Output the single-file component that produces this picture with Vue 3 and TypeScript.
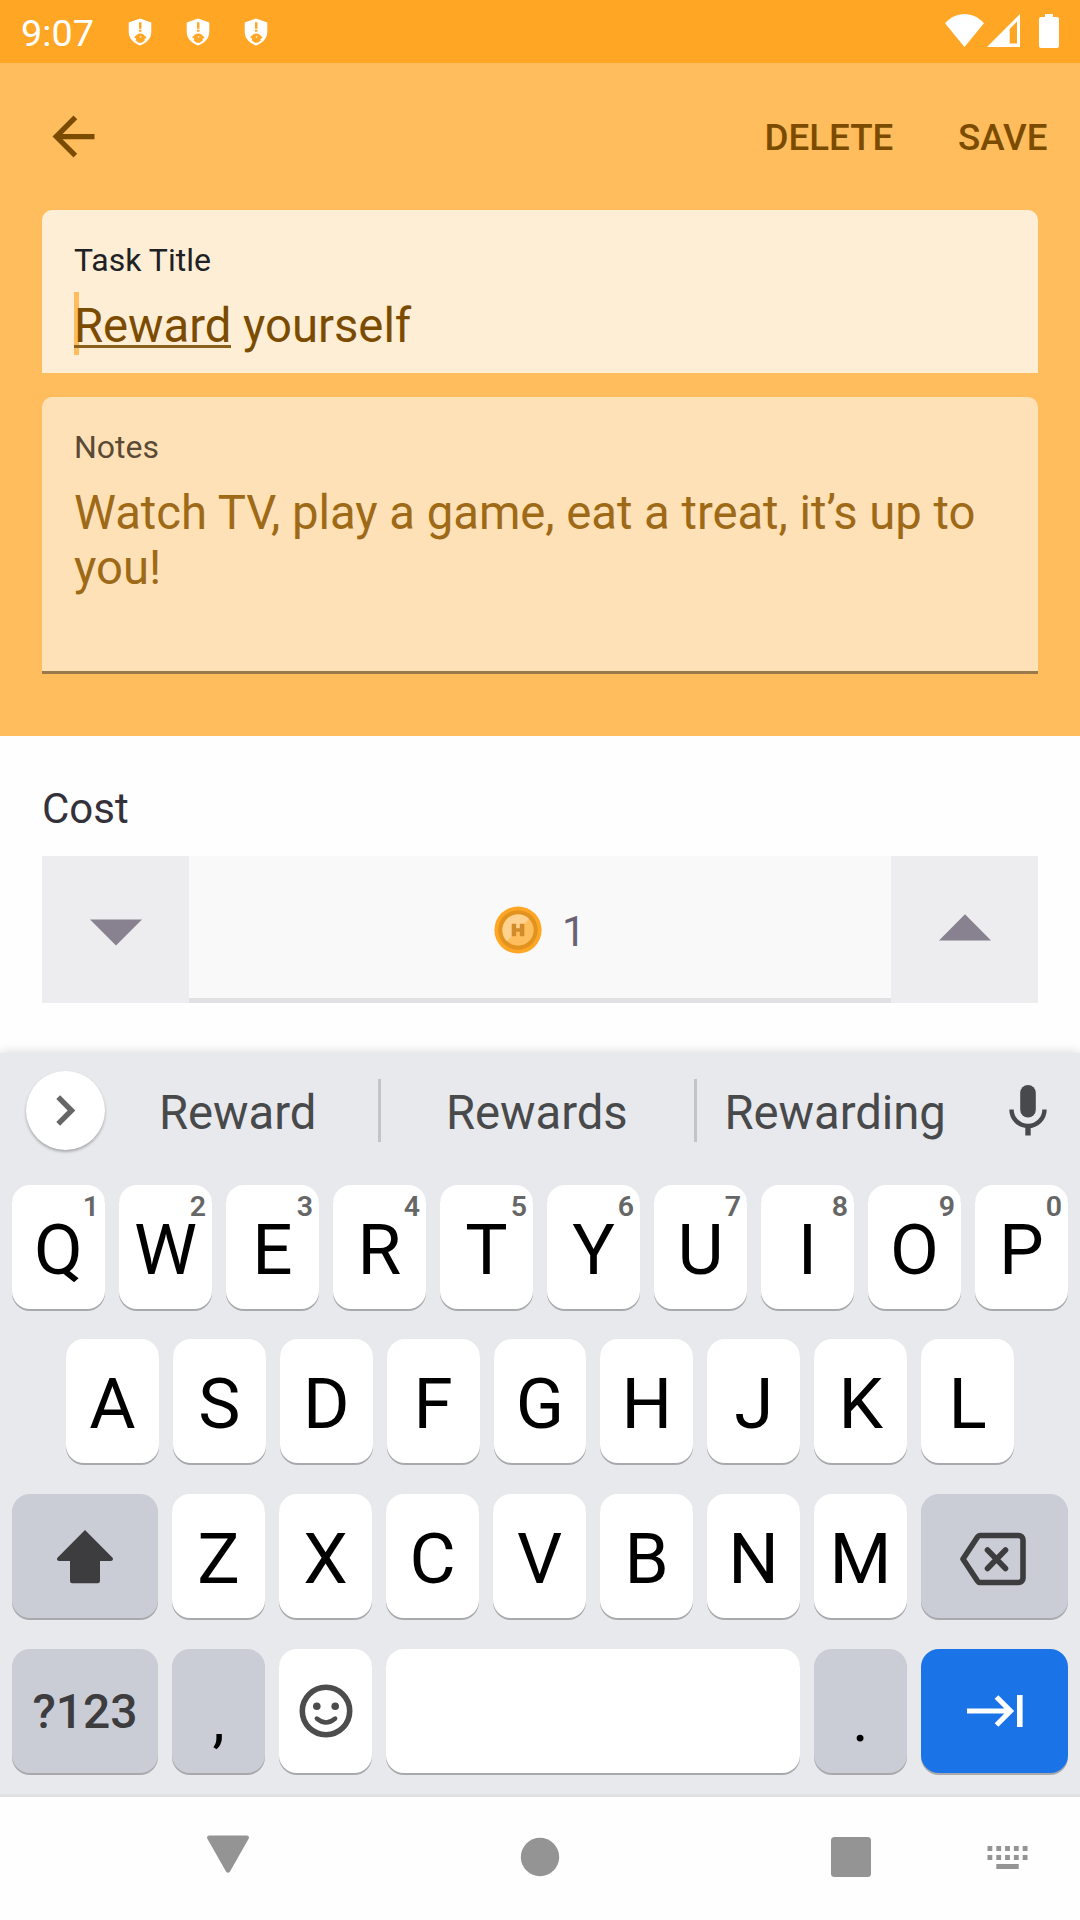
<script setup lang="ts">
interface LetterKey {
  label: string
  hint?: string
}

const topRow: LetterKey[] = 'QWERTYUIOP'.split('').map((label, i) => ({
  label,
  hint: String((i + 1) % 10),
}))
const homeRow: string[] = 'ASDFGHJKL'.split('')
const bottomRow: string[] = 'ZXCVBNM'.split('')
const alerts: number[] = [1, 2, 3]
const dots: number[] = [0, 1, 2, 3, 4]
</script>

<template>
  <div class="screen">
    <div class="status">
      <span class="clock">9:07</span>
      <svg v-for="n in alerts" :key="n" class="shield" viewBox="0 0 24 28">
        <path fill="#fff" d="M12 .5 23.3 4.4V14c0 6.300-4.900 11.200-11.300 13.500C5.600 25.200.7 20.300.7 14V4.400Z" />
        <path fill="#ffa624" d="M11 4.300h2.500v6.400H11zM11 11.700h2.500v2H11zM6 19.500l3-3c2-1.500 4.500-1.500 6.500 0l3.100 3-2.100 1.500.3 1.500-3 2.300h-3l-3-2.300.5-2Z" />
        <path fill="#fff" d="M11.800 18.300h1.500v1.200h-1.500z" />
      </svg>
      <span class="grow"></span>
      <svg class="wifi" viewBox="0 0 39 33"><path fill="#fff" d="M0 9.300C5 3.500 12 0 19.500 0S34 3.500 39 9.300L19.500 33Z" /></svg>
      <svg class="signal" viewBox="0 0 33 33">
        <path fill="#fff" fill-rule="evenodd" d="M33 0V33H0ZM30 7.500 22.700 15V29.500H30Z" />
      </svg>
      <svg class="battery" viewBox="0 0 20 34">
        <path fill="#fff" d="M6 0h8v3h4a2 2 0 0 1 2 2v27a2 2 0 0 1-2 2H2a2 2 0 0 1-2-2V5a2 2 0 0 1 2-2h4Z" />
      </svg>
    </div>

    <header class="header">
      <div class="toolbar">
        <svg class="back" viewBox="0 0 24 24">
          <path fill="#7b4c00" d="M20 11H7.830l5.590-5.590L12 4l-8 8 8 8 1.410-1.410L7.830 13H20v-2z" />
        </svg>
        <span class="grow"></span>
        <span class="action delete">DELETE</span>
        <span class="action">SAVE</span>
      </div>
      <div class="field title-field">
        <div class="label">Task Title</div>
        <div class="value"><span class="caret"></span><span class="composing">Reward</span> yourself</div>
      </div>
      <div class="field notes-field">
        <div class="label">Notes</div>
        <div class="value">Watch TV, play a game, eat a treat, it’s up to you!</div>
      </div>
    </header>

    <main class="cost">
      <div class="cost-label">Cost</div>
      <div class="stepper">
        <div class="step down"><svg width="52" height="27" viewBox="0 0 52 27"><path fill="#878190" d="M0 .4h52L26 26.500Z" /></svg></div>
        <div class="amount">
          <svg class="coin" viewBox="0 0 48 48">
            <circle cx="24" cy="24" r="23.600" fill="#ffa624" />
            <circle cx="24" cy="24" r="19.700" fill="#e1921f" />
            <circle cx="24" cy="24" r="15.700" fill="#ffbe5d" />
            <path fill="#ffd28f" d="M12.900 35.100A15.700 15.700 0 0 1 35.100 12.900Z" />
            <path fill="#d18b28" d="M17.700 17.700h4.500v4.600h3.600v-4.600h4.500v12.600h-4.500v-4.600h-3.600v4.600h-4.500z" />
          </svg>
          <span class="number">1</span>
        </div>
        <div class="step up"><svg width="52" height="27" viewBox="0 0 52 27"><path fill="#878190" d="M0 26.500h52L26 .2Z" /></svg></div>
      </div>
    </main>

    <section class="keyboard">
      <div class="suggestions">
        <div class="expand">
          <svg width="20" height="31" viewBox="0 0 20 31"><path d="M2.200 2.200 15.500 15.500 2.200 28.800" fill="none" stroke="#666" stroke-width="5.400" /></svg>
        </div>
        <div class="word first">Reward</div>
        <div class="divider"></div>
        <div class="word second">Rewards</div>
        <div class="divider"></div>
        <div class="word third">Rewarding</div>
        <svg class="mic" viewBox="0 0 38 51">
          <rect x="11.200" y="0" width="15.600" height="32.500" rx="7.800" fill="#48494b" />
          <path d="M2.500 24.500a16.500 16.500 0 0 0 33 0" fill="none" stroke="#48494b" stroke-width="4.400" />
          <path d="M16.300 40h5.400v10.500h-5.400z" fill="#48494b" />
        </svg>
      </div>

      <div class="row top">
        <div v-for="k in topRow" :key="k.label" class="key">
          {{ k.label }}<span class="hint">{{ k.hint }}</span>
        </div>
      </div>
      <div class="row home">
        <div v-for="k in homeRow" :key="k" class="key">{{ k }}</div>
      </div>
      <div class="row">
        <div class="key grey wide">
          <svg width="58" height="54" viewBox="0 0 58 54">
            <path fill="#3d3d3f" d="M29 0 56.300 27.600c1.400 1.500.5 3.400-1.300 3.400H44v20a2.200 2.200 0 0 1-2.200 2.200H16.200A2.200 2.200 0 0 1 14 51V31H3c-1.800 0-2.700-1.900-1.300-3.400Z" />
          </svg>
        </div>
        <div v-for="k in bottomRow" :key="k" class="key">{{ k }}</div>
        <div class="key grey wide end">
          <svg class="bksp" width="68" height="54" viewBox="0 0 68 54" fill="none" stroke="#3d3d3f" stroke-width="5.600">
            <path stroke-linejoin="round" d="M21 3.500H59.500a4.500 4.500 0 0 1 4.500 4.500V46a4.500 4.500 0 0 1-4.500 4.500H21q-1.500 0-2.500-1.500L4 27 18.500 5q1-1.500 2.500-1.500Z" />
            <path stroke-linecap="round" d="m28.500 18 18 18.500M46.500 18 28.500 36.500" />
          </svg>
        </div>
      </div>
      <div class="row">
        <div class="key grey wide symbols">?123</div>
        <div class="key grey punct">,</div>
        <div class="key">
          <svg class="smile" width="54" height="54" viewBox="0 0 54 54">
            <circle cx="27" cy="27" r="23.700" fill="none" stroke="#4c4c4d" stroke-width="5.600" />
            <circle cx="17.800" cy="22.200" r="3.800" fill="#4c4c4d" />
            <circle cx="36.200" cy="22.200" r="3.800" fill="#4c4c4d" />
            <path d="M17.800 34.500q9.200 8 18.400 0" fill="none" stroke="#4c4c4d" stroke-width="4.400" stroke-linecap="round" />
          </svg>
        </div>
        <div class="key space"></div>
        <div class="key grey punct">.</div>
        <div class="key wide end enter">
          <svg width="56" height="34" viewBox="0 0 56 34">
            <path d="M0 17H43M29.500 3 43.500 17 29.500 31" fill="none" stroke="#fff" stroke-width="5.200" />
            <path d="M50 1h5.600v32H50z" fill="#fff" />
          </svg>
        </div>
      </div>
    </section>

    <nav class="nav">
      <svg viewBox="0 1797 1080 123" fill="#949494" width="1080" height="123">
        <path d="M209 1835.500h38q3 .5 1.500 3.500L230 1871.500q-2 2.500-4 0L207.500 1839q-1.500-3 1.500-3.500Z" />
        <circle cx="540" cy="1857" r="19.200" />
        <rect x="831" y="1837" width="40" height="40" rx="3.500" />
        <g v-for="d in dots" :key="d">
          <rect :x="987.500 + d * 8.800" y="1846" width="4.800" height="5" />
          <rect :x="987.500 + d * 8.800" y="1855" width="4.800" height="5" />
        </g>
        <rect x="996.300" y="1864" width="22.400" height="5" />
      </svg>
    </nav>
  </div>
</template>

<style>
body {
  margin: 0;
  background: #fff;
}
</style>

<style scoped>
.screen {
  width: 1080px;
  height: 1920px;
  overflow: hidden;
  display: flex;
  flex-direction: column;
  font-family: Roboto, sans-serif;
  background: #fefefe;
}
.screen svg {
  display: block;
  flex: none;
}
.grow {
  flex: 1;
}
.status {
  height: 63px;
  flex: none;
  box-sizing: border-box;
  display: flex;
  align-items: flex-start;
  padding: 0 21px 0 21px;
  background: #ffa624;
}
.clock {
  width: 107px;
  font-size: 37.800px;
  line-height: 67px;
  color: #fff;
}
.shield {
  width: 24px;
  height: 28px;
  margin: 18px 34px 0 0;
}
.wifi {
  width: 39px;
  height: 33px;
  margin: 14px 3px 0 0;
}
.signal {
  width: 33px;
  height: 33px;
  margin: 14px 19px 0 0;
}
.battery {
  width: 20px;
  height: 34px;
  margin-top: 14px;
}
.header {
  height: 673px;
  flex: none;
  box-sizing: border-box;
  padding: 0 42px;
  background: #ffbd5d;
}
.toolbar {
  display: flex;
  align-items: center;
  height: 147px;
  margin-right: -9.500px;
}
.back {
  width: 63px;
  height: 63px;
}
.action {
  font-size: 36.750px;
  font-weight: 500;
  line-height: 50px;
  color: #7b4c00;
  margin-top: 2px;
}
.delete {
  margin-right: 64.500px;
}
.field {
  box-sizing: border-box;
  border-radius: 10px 10px 0 0;
  padding: 31px 32px 0;
}
.label {
  font-size: 32px;
  line-height: 38px;
}
.value {
  font-size: 47.250px;
  line-height: 55px;
  letter-spacing: -0.03px;
}
.title-field {
  height: 163px;
  background: #ffeed6;
}
.title-field .label {
  color: #202124;
}
.title-field .value {
  position: relative;
  margin-top: 20px;
  color: #7b4c00;
}
.caret {
  position: absolute;
  left: 0;
  top: -7px;
  width: 5px;
  height: 63px;
  background: #ffbd5d;
}
.composing {
  position: relative;
  display: inline-block;
}
.composing::after {
  content: '';
  position: absolute;
  left: 0;
  right: 0;
  top: 46px;
  height: 3px;
  background: #8b601c;
}
.notes-field {
  height: 276.500px;
  margin-top: 24px;
  background: #ffe1b7;
  border-bottom: 3px solid #9a7a4a;
}
.notes-field .label {
  color: #5a4a35;
}
.notes-field .value {
  margin-top: 20px;
  color: #9e6a17;
}
.cost {
  height: 317px;
  flex: none;
  box-sizing: border-box;
  padding: 48px 42px 0;
}
.cost-label {
  font-size: 42px;
  line-height: 50px;
  color: #34313a;
}
.stepper {
  display: flex;
  height: 147px;
  margin-top: 22px;
}
.step {
  width: 147px;
  box-sizing: border-box;
  display: flex;
  justify-content: center;
  background: #edecee;
}
.down {
  padding-top: 63px;
}
.up {
  padding-top: 58px;
}
.amount {
  flex: 1;
  display: flex;
  align-items: center;
  box-sizing: border-box;
  padding-left: 304.500px;
  background: #f9f9f9;
  border-bottom: 5px solid #e1e1e3;
}
.coin {
  width: 48px;
  height: 48px;
  margin-top: 5px;
}
.number {
  margin: 10px 0 0 20.500px;
  font-size: 42px;
  line-height: 50px;
  color: #686274;
}
.keyboard {
  position: relative;
  height: 744px;
  flex: none;
  box-sizing: border-box;
  background: #e8e9ed;
  border-bottom: 3px solid #e0e1e1;
  box-shadow: 0 -1px 10px rgba(0, 0, 0, 0.14);
}
.suggestions {
  display: flex;
  height: 132px;
  padding: 0 33px 0 26px;
}
.expand {
  width: 79px;
  height: 79px;
  margin-top: 18px;
  border-radius: 50%;
  display: flex;
  align-items: center;
  justify-content: center;
  background: #fff;
  box-shadow: 0 2px 3px rgba(0, 0, 0, 0.28);
}
.expand svg {
  margin-left: 1px;
}
.word {
  margin-top: 32px;
  font-size: 47.250px;
  line-height: 56px;
  letter-spacing: -0.06px;
  color: #48494b;
  box-sizing: border-box;
}
.first {
  width: 273px;
  padding-left: 54px;
}
.second {
  width: 313px;
  padding-left: 65px;
}
.third {
  width: 312px;
  padding-left: 27.500px;
}
.divider {
  width: 3px;
  height: 63px;
  margin-top: 26px;
  background: #c3c4c8;
}
.mic {
  width: 38px;
  height: 51px;
  margin-top: 32px;
}
.row {
  display: flex;
  gap: 14px;
  padding: 0 12px;
  height: 124px;
  margin-bottom: 31px;
}
.top {
  margin-bottom: 30px;
}
.home {
  padding: 0 66px;
}
.key {
  position: relative;
  flex: 1 1 0;
  min-width: 0;
  border-radius: 18px;
  background: #fff;
  box-shadow: 0 2px 0 #a8a9ac;
  font-size: 71px;
  line-height: 130px;
  text-align: center;
  color: #000;
}
.top .key {
  height: 123.500px;
}
.key svg {
  margin: 0 auto;
}
.hint {
  position: absolute;
  right: 6px;
  top: 5px;
  font-size: 28.500px;
  font-weight: 600;
  line-height: 34px;
  color: #666;
}
.grey {
  background: #cacdd6;
}
.wide {
  flex: 0 0 146px;
}
.end {
  flex-basis: 147px;
}
.wide svg {
  margin-top: 36px;
}
.wide svg.bksp {
  margin-top: 38px;
  margin-left: 37.500px;
}
.symbols {
  font-size: 48px;
  font-weight: 500;
  line-height: 126px;
  color: #3d3d3f;
}
.punct {
  font-size: 62px;
  line-height: 142px;
}
.key .smile {
  margin-top: 34.500px;
}
.space {
  flex: 0 0 414px;
}
.enter {
  background: #1b73e8;
}
.enter svg {
  margin-top: 45px;
}
.nav {
  position: relative;
  height: 123px;
  flex: none;
  background: #fefefe;
}
</style>
